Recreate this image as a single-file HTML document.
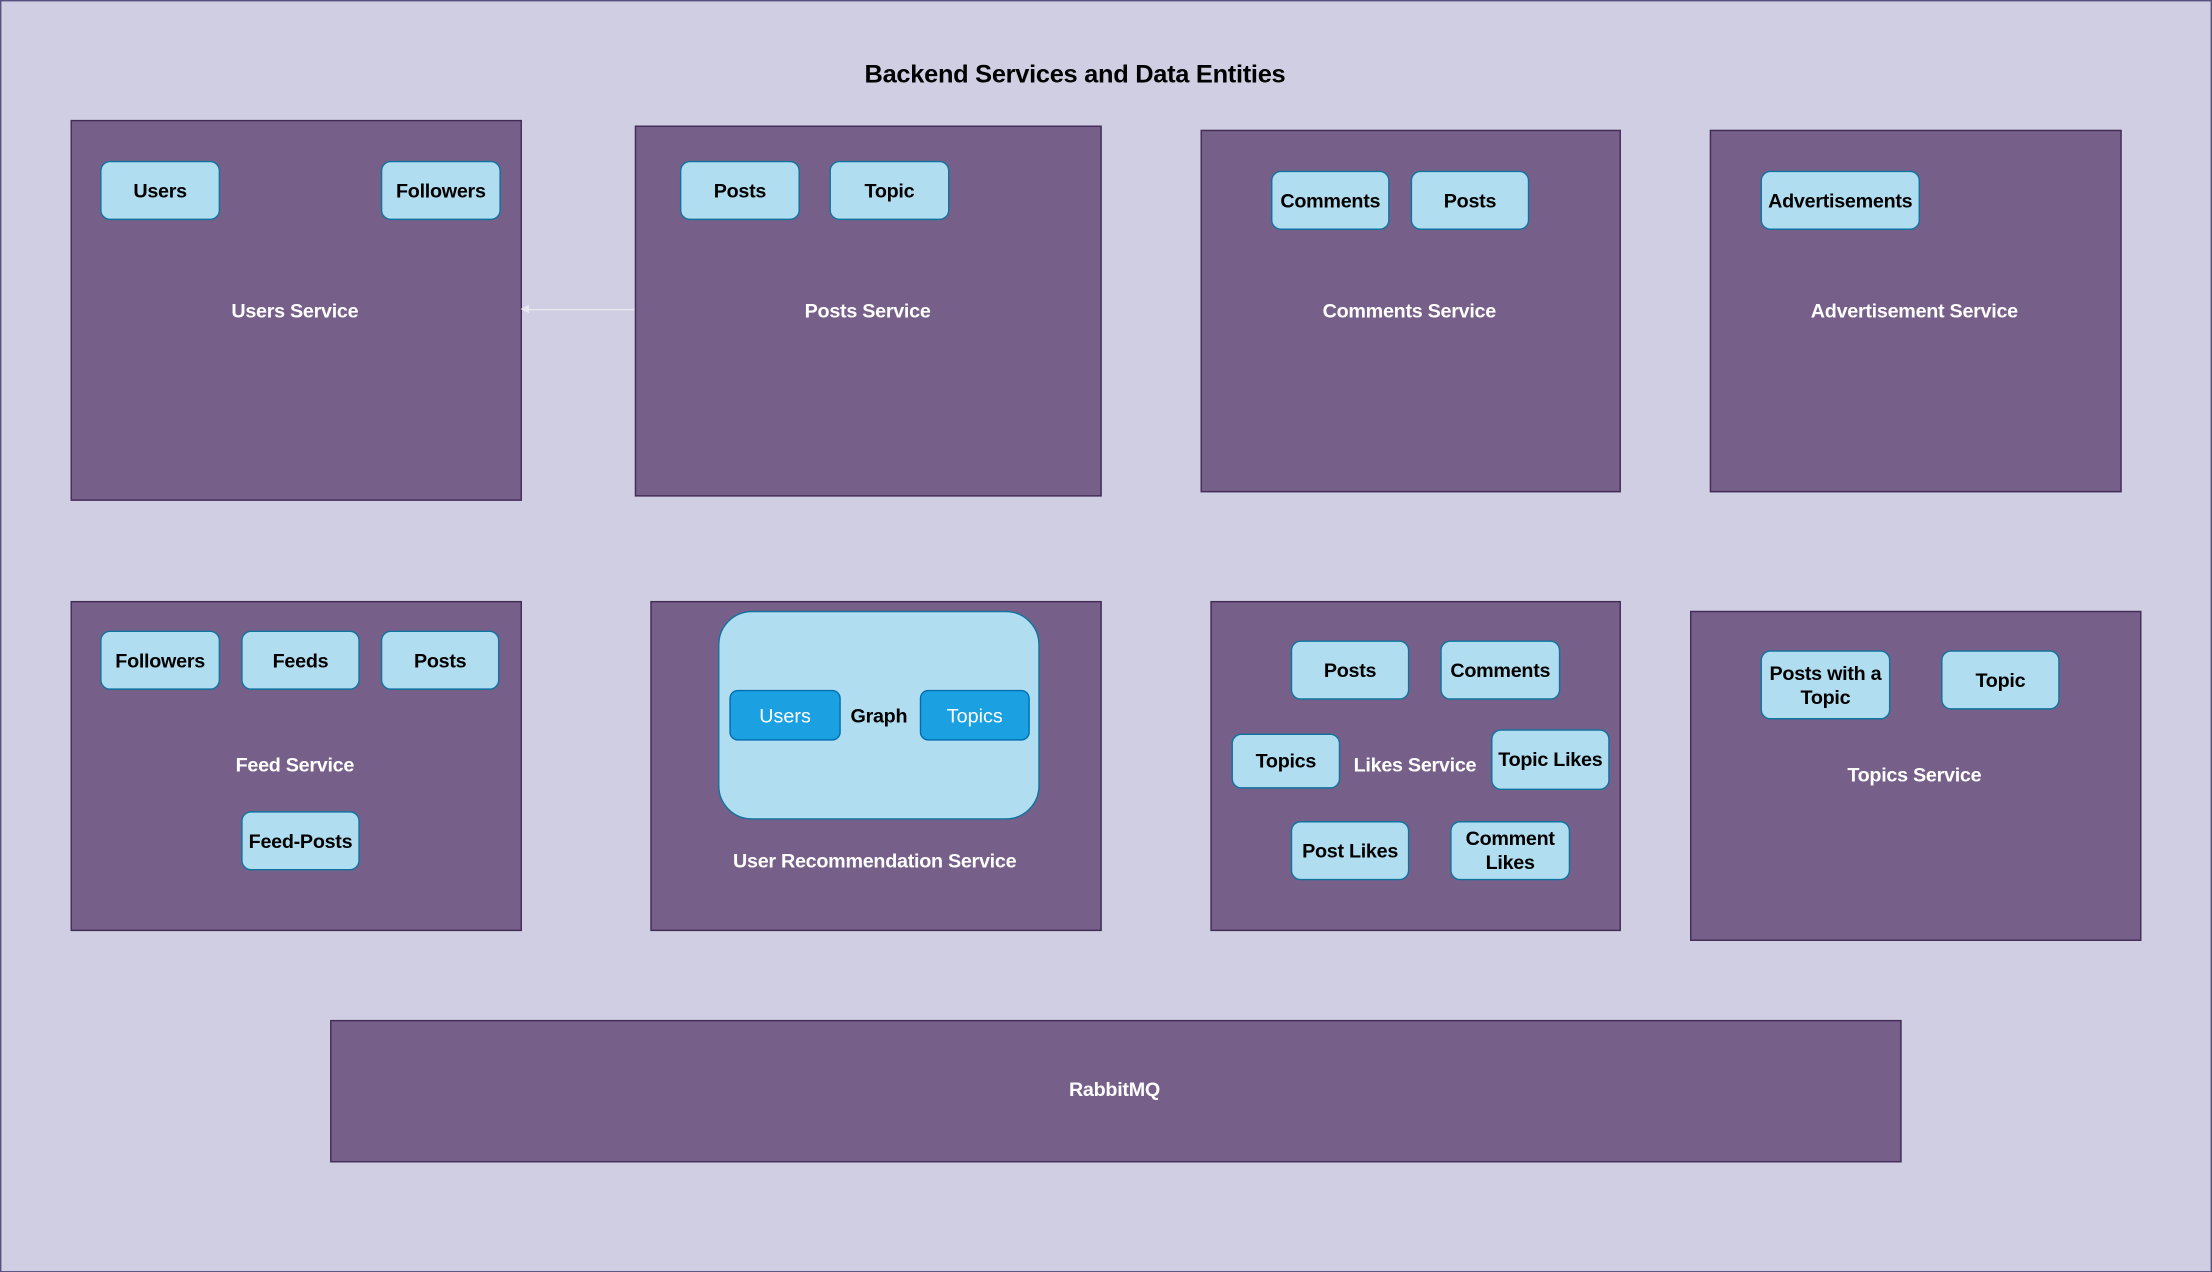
<!DOCTYPE html>
<html><head><meta charset="utf-8"><style>
html,body{margin:0;padding:0;width:2212px;height:1272px;overflow:hidden;background:#d0cee2}
#s{position:absolute;left:0;top:0;width:1568px;height:902px;transform:scale(1.41071);transform-origin:0 0;font-family:"Liberation Sans",Arial,sans-serif;font-weight:bold}
#bd{position:absolute;left:0;top:0;width:1568px;height:902px;box-sizing:border-box;border:1px solid #56517e}
.b{position:absolute;background:#76608a;border:1px solid #432d57;box-sizing:border-box}
.e{position:absolute;background:#b1ddf0;border:1px solid #10739e;border-radius:7px;box-sizing:border-box;display:flex;align-items:center;justify-content:center;text-align:center;font-size:14px;color:#000;line-height:17px;letter-spacing:-0.2px}
.l{position:absolute;color:#fff;font-size:14px;transform:translate(-50%,-50%);white-space:nowrap;letter-spacing:-0.2px}
.u{position:absolute;background:#1ba1e2;border:1px solid #006eaf;border-radius:6px;box-sizing:border-box;display:flex;align-items:center;justify-content:center;color:#fff;font-size:14px;font-weight:normal}
</style></head><body><div id="s">
<div id="bd"></div>
<div class="l" style="left:762px;top:53px;color:#000;font-size:18px">Backend Services and Data Entities</div>

<div class="b" style="left:50px;top:85px;width:320px;height:270px"></div>
<div class="e" style="left:71px;top:114px;width:85px;height:42px">Users</div>
<div class="e" style="left:270px;top:114px;width:85px;height:42px">Followers</div>
<div class="l" style="left:209px;top:220px">Users Service</div>

<div style="position:absolute;left:372px;top:219px;width:78px;height:1px;background:#e8e6f0"></div>
<div style="position:absolute;left:369px;top:216px;width:0;height:0;border-top:3.5px solid transparent;border-bottom:3.5px solid transparent;border-right:6px solid #e8e6f0"></div>

<div class="b" style="left:450px;top:89px;width:331px;height:263px"></div>
<div class="e" style="left:482px;top:114px;width:85px;height:42px">Posts</div>
<div class="e" style="left:588px;top:114px;width:85px;height:42px">Topic</div>
<div class="l" style="left:615px;top:220px">Posts Service</div>

<div class="b" style="left:851px;top:92px;width:298px;height:257px"></div>
<div class="e" style="left:901px;top:121px;width:84px;height:42px">Comments</div>
<div class="e" style="left:1000px;top:121px;width:84px;height:42px">Posts</div>
<div class="l" style="left:999px;top:220px">Comments Service</div>

<div class="b" style="left:1212px;top:92px;width:292px;height:257px"></div>
<div class="e" style="left:1248px;top:121px;width:113px;height:42px">Advertisements</div>
<div class="l" style="left:1357px;top:220px">Advertisement Service</div>

<div class="b" style="left:50px;top:426px;width:320px;height:234px"></div>
<div class="e" style="left:71px;top:447px;width:85px;height:42px">Followers</div>
<div class="e" style="left:171px;top:447px;width:84px;height:42px">Feeds</div>
<div class="e" style="left:270px;top:447px;width:84px;height:42px">Posts</div>
<div class="l" style="left:209px;top:542px">Feed Service</div>
<div class="e" style="left:171px;top:575px;width:84px;height:42px">Feed-Posts</div>

<div class="b" style="left:461px;top:426px;width:320px;height:234px"></div>
<div class="e" style="left:509px;top:433px;width:228px;height:148px;border-radius:24px"></div>
<div class="u" style="left:517px;top:489px;width:79px;height:36px">Users</div>
<div class="u" style="left:652px;top:489px;width:78px;height:36px">Topics</div>
<div class="l" style="left:623px;top:507px;color:#000">Graph</div>
<div class="l" style="left:620px;top:610px">User Recommendation Service</div>

<div class="b" style="left:858px;top:426px;width:291px;height:234px"></div>
<div class="e" style="left:915px;top:454px;width:84px;height:42px">Posts</div>
<div class="e" style="left:1021px;top:454px;width:85px;height:42px">Comments</div>
<div class="e" style="left:873px;top:520px;width:77px;height:39px">Topics</div>
<div class="l" style="left:1003px;top:542px">Likes Service</div>
<div class="e" style="left:1057px;top:517px;width:84px;height:43px">Topic Likes</div>
<div class="e" style="left:915px;top:582px;width:84px;height:42px">Post Likes</div>
<div class="e" style="left:1028px;top:582px;width:85px;height:42px">Comment<br>Likes</div>

<div class="b" style="left:1198px;top:433px;width:320px;height:234px"></div>
<div class="e" style="left:1248px;top:461px;width:92px;height:49px">Posts with a<br>Topic</div>
<div class="e" style="left:1376px;top:461px;width:84px;height:42px">Topic</div>
<div class="l" style="left:1357px;top:549px">Topics Service</div>

<div class="b" style="left:234px;top:723px;width:1114px;height:101px"></div>
<div class="l" style="left:790px;top:772px">RabbitMQ</div>
</div></body></html>
